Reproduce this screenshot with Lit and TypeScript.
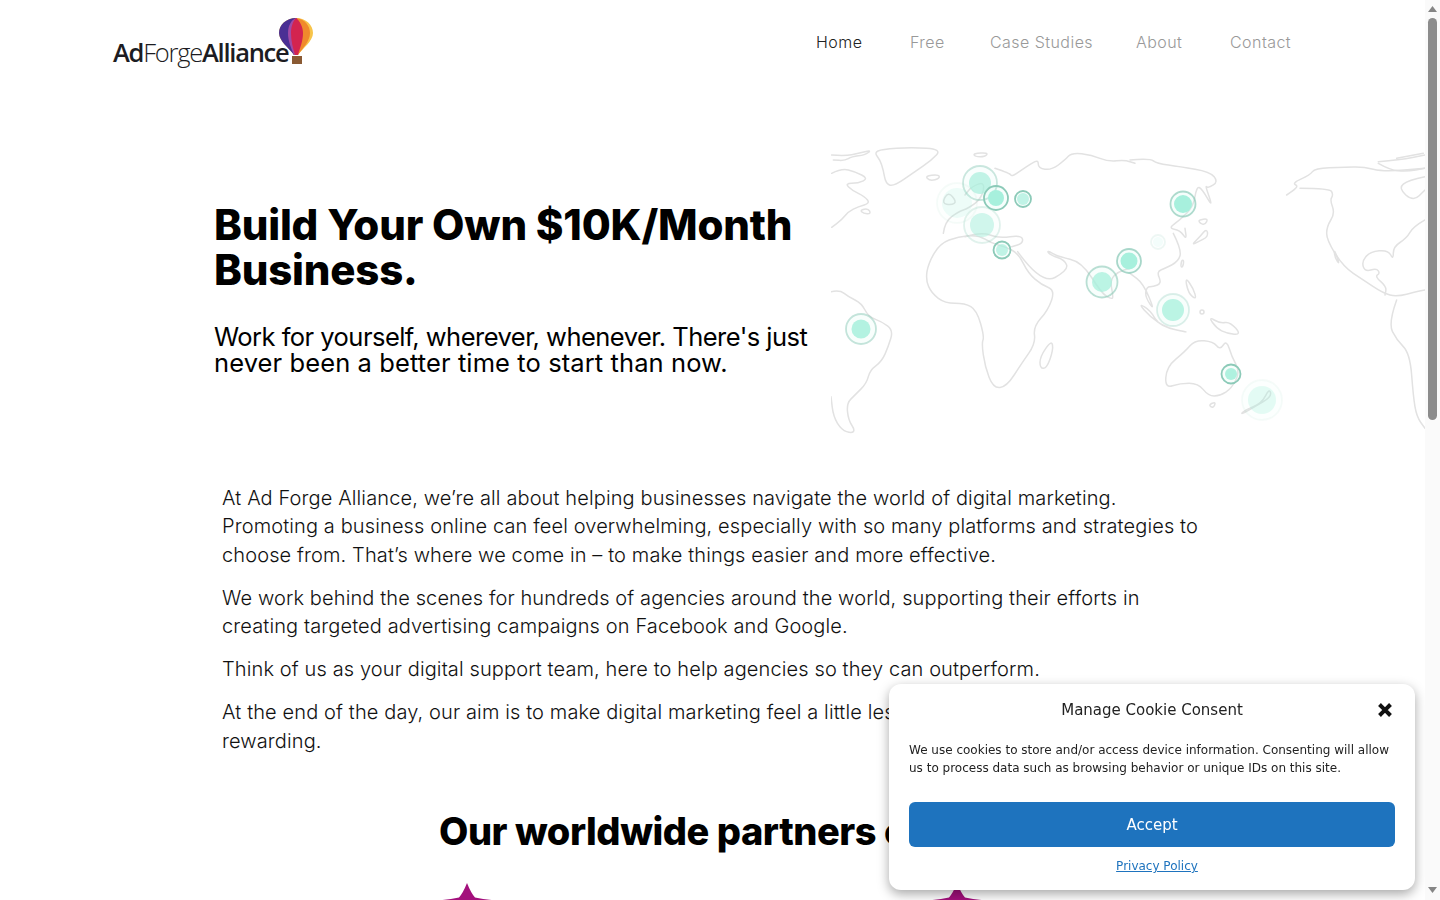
import { LitElement, html, css, svg } from "lit";
import { customElement } from "lit/decorators.js";

const circles: [number, number, number, number, number, number][] = [
  // x, y, inner r, outer r, fill opacity, ring opacity
  [980, 183, 11, 17, 0.7, 0.45],
  [996, 198, 8, 12, 1, 1],
  [1023, 199, 6, 8, 0.7, 1],
  [957, 203, 15, 20, 0.18, 0.08],
  [982, 225, 12, 18, 0.5, 0.25],
  [1002, 250, 6, 8.5, 0.7, 1],
  [1102, 282, 10, 15.5, 0.75, 0.6],
  [1129, 261, 8.5, 12, 1, 0.75],
  [861, 329, 9.5, 15, 0.85, 0.5],
  [1183, 204, 9, 12.5, 1, 0.7],
  [1158, 242, 5, 7, 0.12, 0.15],
  [1173, 310, 11, 16, 0.75, 0.3],
  [1231, 374, 6, 9.5, 0.9, 1],
  [1262, 400, 14, 20, 0.28, 0.08],
];

const west: [string, boolean][] = [
  ["20 45 60 48 100 40 140 30 120 45 80 50 60 62 25 60", false],
  ["148 38 170 28 260 22 350 28 320 60 270 95 205 140 182 130 175 90 165 60", true],
  ["300 108 340 103 345 115 315 123", true],
  ["445 40 490 38 480 50 450 50", true],
  ["20 100 50 85 90 95 130 115 100 130 60 130 80 150 120 170 135 190 100 200 70 215 50 240 20 262", false],
  ["105 210 130 205 138 222 115 220", true],
  ["18 455 45 450 70 470 110 490 130 530 170 545 205 570 190 620 170 665 135 690 125 730 90 765 65 790 70 840 90 870 80 880 50 870 25 830 18 770", false],
  ["345 310 400 290 460 285 500 310 540 320 580 340 610 400 650 435 690 450 670 510 625 560 632 610 590 670 545 740 505 745 480 680 470 610 478 590 455 510 420 490 360 490 320 460 302 420 310 370", true],
  ["680 600 685 630 665 685 645 685 645 650", true],
  ["578 335 650 435 730 390 720 360 675 345 665 330 700 350 770 365 830 460 860 478 865 470 855 420 880 395 915 385", false],
  ["355 280 360 245 400 215 430 205 470 175 480 125 440 140 420 165", false],
  ["350 190 370 155 395 185 380 195", true],
  ["420 290 470 275 520 295 590 285 595 310 560 320", false],
  ["510 85 555 100 560 110 590 90 620 70 640 60 640 85 680 90 720 60 740 38 800 45 850 65 900 60 930 70", false],
];
const east: [string, boolean][] = [
  ["0 60 60 55 80 70 150 80 240 95 265 125 235 145 225 135 250 205 215 145 200 140 190 200 150 240 115 265 150 270 170 300 165 265", false],
  ["130 280 155 330 145 365 105 385 80 395 95 430 70 440 50 440 45 470 75 515 40 430 0 400", false],
  ["185 315 210 290 230 265 235 290 205 305", true],
  ["205 240 235 235 225 255 210 250", true],
  ["25 490 60 510 90 560 190 580 110 565 60 530", true],
  ["165 410 190 445 200 480 175 460", true],
  ["210 510 222 510 222 522 210 522", true],
  ["235 530 270 550 300 545 335 585 290 580 260 565", true],
  ["110 680 165 635 195 600 250 605 270 630 290 600 305 650 330 695 305 745 270 768 235 768 205 730 150 730 105 745", true],
  ["235 795 258 785 250 805", true],
  ["330 825 375 800 425 770 418 745 395 790 345 810", true],
  ["155 360 162 362 158 382 152 380", true],
  ["470 165 510 140 485 130 540 105 555 85 640 82 700 80 760 95 885 85", false],
  ["510 145 600 145 610 165 600 180 615 220 590 260 590 300 640 380 700 420 760 460 800 470 860 455 885 450", false],
  ["612 325 630 375 615 355", true],
  ["885 240 850 260 830 295 790 320 790 360 775 330 720 335 695 365 705 395 740 385 750 400 735 410 770 440 765 465", false],
  ["745 65 810 60 885 45", false],
  ["745 70 780 90 830 95 885 85", false],
  ["800 55 880 40", false],
  ["885 110 835 120 805 145 850 185 885 150", false],
  ["800 480 775 550 800 600 840 640 850 770 860 830 885 865", false],
];

/** Rounds a traced coast polyline with quadratic curves through the segment midpoints. */
function smooth([pts, closed]: [string, boolean]): string {
  const n = pts.split(" ").map(Number);
  const p: [number, number][] = [];
  for (let i = 0; i < n.length; i += 2) p.push([n[i], n[i + 1]]);
  const mid = (a: [number, number], b: [number, number]) => `${(a[0] + b[0]) / 2} ${(a[1] + b[1]) / 2}`;
  if (closed) {
    let d = `M${mid(p[p.length - 1], p[0])}`;
    p.forEach((c, i) => (d += `Q${c[0]} ${c[1]} ${mid(c, p[(i + 1) % p.length])}`));
    return d + "Z";
  }
  let d = `M${p[0][0]} ${p[0][1]}`;
  for (let i = 1; i < p.length - 1; i++) d += `Q${p[i][0]} ${p[i][1]} ${mid(p[i], p[i + 1])}`;
  return d + `L${p[p.length - 1][0]} ${p[p.length - 1][1]}`;
}

@customElement("app-root")
export class AppRoot extends LitElement {
  static styles = css`
    :host { display: block; background: #fff; color: #000; font-family: Inter, "Liberation Sans", sans-serif; }
    .header { display: flex; align-items: center; justify-content: space-between; height: 84px; padding: 0 148px 0 113px; box-sizing: border-box; }
    .logo { height: 50px; position: relative; width: 200px; }
    .logo-text { font-family: "Open Sans", sans-serif; font-size: 25.500px; line-height: 50px; letter-spacing: -1.25px; color: #1c1c22; margin-top: 10px; white-space: nowrap; }
    .logo-text b { font-weight: 600; }
    .logo-text span { font-weight: 300; }
    .balloon { position: absolute; left: 166px; top: 1px; }
    .nav { display: grid; grid-template-columns: 49px 35px 101px 49px 62px; gap: 45px; font-size: 16px; font-weight: 300; letter-spacing: 0.45px; color: #999; white-space: nowrap; }
    .nav .on { color: #222; }
    .hero { display: flex; align-items: flex-start; padding: 62px 0 0 214px; height: 337.500px; }
    .hero-text { width: 617px; flex: none; }
    h1 { margin: 56px 0 0; font-size: 42px; line-height: 45px; font-weight: 800; letter-spacing: -0.2px; }
    .sub { margin: 32px 0 0; font-size: 25.500px; line-height: 26px; font-weight: 400; white-space: nowrap; }
    .sub span { display: block; }
    .sub .first { letter-spacing: -0.53px; }
    .sub .second { letter-spacing: 0.1px; }
    .map { flex: none; width: 594px; height: 289px; display: block; }
    .body { padding: 0 0 0 222px; width: 1010px; font-size: 20px; font-weight: 300; line-height: 28.500px; letter-spacing: 0.12px; color: #111; }
    .body p { margin: 0 0 14.500px; white-space: nowrap; }
    h2 { margin: 51px 0 0; padding-left: 439px; font-size: 38px; line-height: 50px; font-weight: 800; letter-spacing: -0.45px; white-space: nowrap; }
    .stars { display: grid; grid-template-columns: repeat(2, 490px); margin: 27px 0 0 222px; row-gap: 120px; padding-bottom: 500px; }
    .star { justify-self: center; display: block; }
    .cookie { position: fixed; left: 889px; top: 684px; width: 526px; height: 206px; box-sizing: border-box; background: #fff; border-radius: 12px; box-shadow: 0 4px 12px rgba(0,0,0,.35); padding: 0 20px; font-family: "DejaVu Sans", sans-serif; color: #222; }
    .cookie-title { height: 51px; display: flex; align-items: center; justify-content: center; font-size: 15px; position: relative; }
    .close { position: absolute; right: 2px; top: 18px; display: block; }
    .cookie-msg { margin: 6px 0 0; font-size: 12px; line-height: 18px; }
    .accept { margin-top: 25px; height: 45px; display: flex; align-items: center; justify-content: center; background: #1e73be; color: #fff; border-radius: 6px; font-size: 15px; }
    .policy { display: block; margin-top: 11px; padding-left: 10px; text-align: center; font-size: 12px; color: #1e73be; text-decoration: underline; line-height: 16px; }
    .scrollbar { position: fixed; top: 0; right: 0; bottom: 0; width: 15px; background: #fafafa; }
    .thumb { position: absolute; top: 18px; left: 3px; width: 9px; height: 402px; background: #8c8c8c; border-radius: 5px; }
    .arrow { display: block; position: absolute; left: 3px; }
    .arrow.up { top: 6px; }
    .arrow.down { bottom: 7px; }
  `;

  render() {
    const star = html`<svg class="star" width="50" height="48" viewBox="0 0 50 48"><path d="M25 0q4 10 8 14.500q8 1.500 16.500 2.500q-8 5-13 12l4 19q-8-6-15.500-9.500q-8 3.500-15.500 9.500l4-19q-5-7-13-12q8.500-1 16.500-2.500q4-4.500 8-14.500z" fill="#a3107c"/></svg>`;
    return html`
      <header class="header">
        <div class="logo">
          <div class="logo-text"><b>Ad</b><span>Forge</span><b>Alliance</b></div>
          <svg class="balloon" width="34" height="46" viewBox="0 0 34 46">
            <path d="M17 0C7 0 0 7 0 15c0 8 10 15 15 22h4c5-7 15-14 15-22C34 7 27 0 17 0z" fill="#f7c44a"/>
            <path d="M17 0C9 1 5 8 5 15c0 8 6 15 10 22h4c5-7 12-14 12-22 0-7-5-14-14-15z" fill="#f08a2c"/>
            <path d="M17 0C7 0 0 7 0 15c0 8 10 15 15 22h2V0z" fill="#4a2f94"/>
            <path d="M17 0c-5 2-8 8-8 15 0 8 3 15 6 22h3V0z" fill="#a04aa6"/>
            <path d="M17 0c-3 3-5 9-5 15 0 8 2 15 4 22h3c2-7 5-14 5-22 0-6-3-12-7-15z" fill="#d3244f"/>
            <rect x="13" y="38" width="10" height="8" fill="#8a5a33"/>
          </svg>
        </div>
        <nav class="nav"><span class="on">Home</span><span>Free</span><span>Case Studies</span><span>About</span><span>Contact</span></nav>
      </header>
      <section class="hero">
        <div class="hero-text">
          <h1>Build Your Own $10K/Month<br />Business.</h1>
          <p class="sub"><span class="first">Work for yourself, wherever, whenever. There's just</span><span class="second">never been a better time to start than now.</span></p>
        </div>
        <svg class="map" viewBox="831 146 594 289" fill="none" stroke-linejoin="round" stroke-linecap="round">
          <g stroke="#e2e2e2" stroke-width="4.500" transform="translate(825 140) scale(.3333)">
            ${west.map((s) => svg`<path d=${smooth(s)} />`)}
          </g>
          <g stroke="#e2e2e2" stroke-width="4.500" transform="translate(1130 140) scale(.3333)">
            ${east.map((s) => svg`<path d=${smooth(s)} />`)}
          </g>
          ${circles.map(([x, y, r, R, fo, ro]) => svg`
            <circle cx=${x} cy=${y} r=${r} fill="#a6f0dc" fill-opacity=${fo} />
            <circle cx=${x} cy=${y} r=${R} fill="#b6f3e3" fill-opacity=${fo * 0.12} stroke="#8ccab8" stroke-opacity=${ro} stroke-width="1.800" />
          `)}
        </svg>
      </section>
      <section class="body">
        <p>At Ad Forge Alliance, we’re all about helping businesses navigate the world of digital marketing.<br />Promoting a business online can feel overwhelming, especially with so many platforms and strategies to<br />choose from. That’s where we come in – to make things easier and more effective.</p>
        <p>We work behind the scenes for hundreds of agencies around the world, supporting their efforts in<br />creating targeted advertising campaigns on Facebook and Google.</p>
        <p>Think of us as your digital support team, here to help agencies so they can outperform.</p>
        <p>At the end of the day, our aim is to make digital marketing feel a little less daunting and a lot more<br />rewarding.</p>
      </section>
      <h2>Our worldwide partners c</h2>
      <div class="stars">${star}${star}${star}${star}${star}${star}</div>
      <aside class="cookie">
        <div class="cookie-title">Manage Cookie Consent
          <svg class="close" width="16" height="16" viewBox="0 0 16 16"><path d="M2.500 2.500l11 11M13.500 2.500l-11 11" stroke="#111" stroke-width="4" /></svg>
        </div>
        <p class="cookie-msg">We use cookies to store and/or access device information. Consenting will allow<br />us to process data such as browsing behavior or unique IDs on this site.</p>
        <div class="accept">Accept</div>
        <a class="policy">Privacy Policy</a>
      </aside>
      <div class="scrollbar">
        <svg class="arrow up" width="9" height="6" viewBox="0 0 9 6"><path d="M4.500 0L9 6H0z" fill="#858585" /></svg>
        <div class="thumb"></div>
        <svg class="arrow down" width="9" height="6" viewBox="0 0 9 6"><path d="M4.500 6L9 0H0z" fill="#858585" /></svg>
      </div>
    `;
  }
}
